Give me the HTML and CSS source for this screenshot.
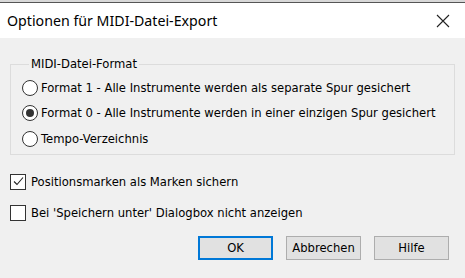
FILE: index.html
```
<!DOCTYPE html>
<html>
<head>
    <meta charset="utf-8">
    <title>Optionen für MIDI-Datei-Export</title>
    <link rel="stylesheet" href="styles.css">
</head>
<body>
    <div class="backdrop"></div>
    <div class="titlebar">
        <span class="title">Optionen für MIDI-Datei-Export</span>
        <svg class="close" width="14" height="14" viewBox="0 0 14 14">
            <path d="M1 1 L13 13 M13 1 L1 13" stroke="#222" stroke-width="1.1" fill="none"/>
        </svg>
    </div>
    <div class="content">
        <fieldset class="group">
            <legend>MIDI-Datei-Format</legend>
            <label class="option"><span class="radio"></span>Format 1 - Alle Instrumente werden als separate Spur gesichert</label>
            <label class="option"><span class="radio checked"></span>Format 0 - Alle Instrumente werden in einer einzigen Spur gesichert</label>
            <label class="option"><span class="radio"></span>Tempo-Verzeichnis</label>
        </fieldset>
        <label class="check-row first">
            <span class="checkbox">
                <svg width="13" height="13" viewBox="0 0 13 13"><path d="M2 6.5 L5 9.5 L11 2.5" stroke="#222" stroke-width="1.1" fill="none"/></svg>
            </span>Positionsmarken als Marken sichern
        </label>
        <label class="check-row"><span class="checkbox"></span>Bei 'Speichern unter' Dialogbox nicht anzeigen</label>
        <div class="buttons">
            <button class="btn default">OK</button>
            <button class="btn">Abbrechen</button>
            <button class="btn">Hilfe</button>
        </div>
    </div>
</body>
</html>
```

FILE: styles.css
```
body {
    margin: 0;
    background-color: #f0f0f0;
    font-family: Tahoma, "DejaVu Sans", sans-serif;
    font-size: 11.6px;
    color: #000;
    width: 465px;
    height: 278px;
    overflow: hidden;
}
.backdrop {
    height: 2px;
    background-color: #d8d8d8;
    border-bottom: 1px solid #555;
}
.titlebar {
    height: 35px;
    background-color: #fff;
    display: flex;
    align-items: center;
    justify-content: space-between;
    padding: 0 15px 0 7px;
}
.title {
    font-family: "Segoe UI", "Noto Sans", sans-serif;
    font-size: 14.2px;
    color: #000;
}
.content {
    padding: 19px 10px 0 10px;
}
.group {
    margin: 0;
    border: 1px solid #dcdcdc;
    padding: 4px 0 10px 11px;
    height: 82px;
}
.group legend {
    padding: 0 2px;
    margin-left: 7px;
}
.option, .check-row {
    display: flex;
    align-items: center;
    gap: 3px;
    height: 25.5px;
}
.radio {
    width: 14px;
    height: 14px;
    border: 1px solid #333;
    border-radius: 50%;
    background-color: #fff;
    display: flex;
    align-items: center;
    justify-content: center;
}
.radio.checked::after {
    content: "";
    width: 8px;
    height: 8px;
    border-radius: 50%;
    background-color: #333;
}
.check-row {
    height: 31px;
    gap: 5px;
}
.check-row.first {
    margin-top: 11px;
}
.checkbox {
    width: 14px;
    height: 14px;
    border: 1px solid #333;
    background-color: #fff;
    display: flex;
    align-items: center;
    justify-content: center;
}
.buttons {
    display: flex;
    justify-content: flex-end;
    gap: 13px;
    margin-top: 8px;
    padding-right: 6px;
}
.btn {
    width: 75px;
    height: 24px;
    background-color: #e1e1e1;
    border: 1px solid #adadad;
    font-family: Tahoma, "DejaVu Sans", sans-serif;
    font-size: 11.6px;
    color: #000;
    padding: 0;
}
.btn.default {
    border: 2px solid #0078d7;
}
```
